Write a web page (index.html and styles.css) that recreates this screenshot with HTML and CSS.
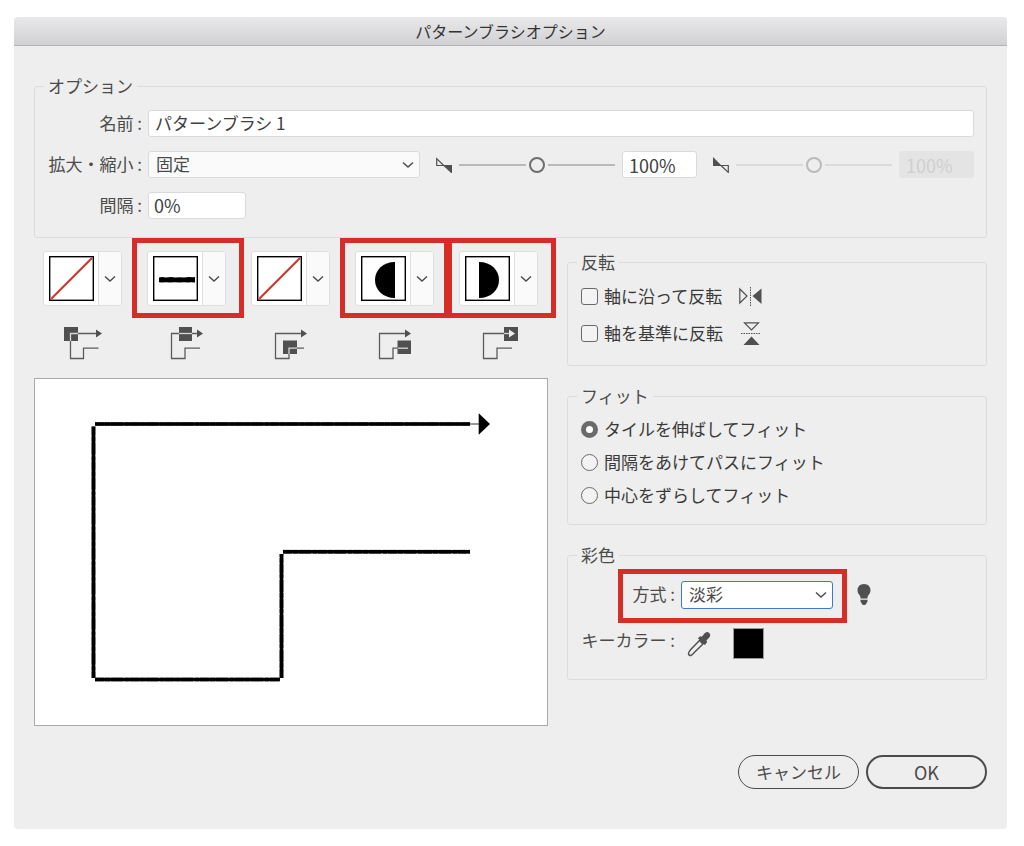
FILE: index.html
```html
<!DOCTYPE html>
<html lang="ja">
<head>
<meta charset="utf-8">
<meta name="viewport" content="width=device-width, initial-scale=1">
<title>パターンブラシオプション</title>
<link rel="stylesheet" href="styles.css">
</head>
<body>
<form class="dialog">
  <header class="titlebar"><h1 class="title">パターンブラシオプション</h1></header>

  <div class="content">
    <fieldset class="group group-options">
      <legend>オプション</legend>
      <div class="rows">
        <div class="row">
          <label class="label" for="name">名前 :</label>
          <input class="text-box grow" id="name" type="text" value="パターンブラシ 1">
        </div>
        <div class="row">
          <label class="label" for="scale">拡大・縮小 :</label>
          <div class="scale-line">
            <div class="select-wrap grow">
              <select class="select" id="scale"><option>固定</option></select>
              <svg class="chevron" viewBox="0 0 12 8"><path d="M1 1.5 6 6l5-4.5"/></svg>
            </div>
            <div class="scale-control">
              <svg class="scale-icon" viewBox="0 0 16 16"><path class="line" d="M.7 1.6v6.9h7zM8 8.5h7.4v6.9z"/><path class="solid" d="M8 8h8v8z"/></svg>
              <input class="slider" type="range" min="0" max="200" value="100" aria-label="最小">
              <input class="text-box number" type="text" value="100%" aria-label="最小の値">
            </div>
            <div class="scale-control">
              <svg class="scale-icon" viewBox="0 0 16 16"><path class="line" d="M8 8.5h7.3v6.9z"/><path class="solid" d="M0 0v9h9z"/></svg>
              <input class="slider" type="range" min="0" max="200" value="100" aria-label="最大" disabled>
              <input class="text-box number" type="text" value="100%" aria-label="最大の値" disabled>
            </div>
          </div>
        </div>
        <div class="row">
          <label class="label" for="spacing">間隔 :</label>
          <input class="text-box spacing" id="spacing" type="text" value="0%">
        </div>
      </div>
    </fieldset>

    <div class="columns">
      <section class="tiles-column">
        <div class="tiles">
          <div class="tile">
            <button class="swatch" type="button" aria-label="外角タイル">
              <svg class="thumb" viewBox="0 0 45 45"><rect class="frame" x=".7" y=".7" width="43.6" height="43.6"/><path class="none" d="M2 43 43 2"/></svg>
              <span class="drop"><svg class="chevron-inline" viewBox="0 0 12 8"><path d="M1 1.5 6 6l5-4.5"/></svg></span>
            </button>
            <svg class="position" viewBox="0 0 79 34"><path class="solid" d="M21 0h14v14H21z"/><path class="route" d="M35 6.500h19M27.500 14v17.500h13V21.200h15"/><path class="route-light" d="M27.500 14V6.500H35"/><path class="solid" d="M53 2.500 59 6.500l-6 4z"/></svg>
          </div>
          <div class="tile highlighted">
            <button class="swatch" type="button" aria-label="サイドタイル">
              <svg class="thumb" viewBox="0 0 45 45"><rect class="frame" x=".7" y=".7" width="43.6" height="43.6"/><path class="ink" d="M6 21.500l3-.4 4 .3 5-.3 4 .4 5-.3 4 .2 5-.3 4 .2 2-.2v5.300l-4-.2-3 .4-4-.4-5 .3-4-.3-5 .3-4-.3-4 .3-3-.3z"/></svg>
              <span class="drop"><svg class="chevron-inline" viewBox="0 0 12 8"><path d="M1 1.5 6 6l5-4.5"/></svg></span>
            </button>
            <svg class="position" viewBox="0 0 79 34"><path class="solid" d="M32 0h13v14H32z"/><path class="route" d="M32 6.500h-7.500v25h13.500V21.200h15M45 6.500h6"/><path class="route-light" d="M32 6.500h13"/><path class="solid" d="M50 2.500l6 4-6 4z"/></svg>
          </div>
          <div class="tile">
            <button class="swatch" type="button" aria-label="内角タイル">
              <svg class="thumb" viewBox="0 0 45 45"><rect class="frame" x=".7" y=".7" width="43.6" height="43.6"/><path class="none" d="M2 43 43 2"/></svg>
              <span class="drop"><svg class="chevron-inline" viewBox="0 0 12 8"><path d="M1 1.5 6 6l5-4.5"/></svg></span>
            </button>
            <svg class="position" viewBox="0 0 79 34"><path class="solid" d="M32 13.500h14v13.500H32z"/><path class="route" d="M51 6.500H24.500v25h13.500V27M46 21.200h7"/><path class="route-light" d="M38 27v-5.800h8"/><path class="solid" d="M50 2.500l6 4-6 4z"/></svg>
          </div>
          <div class="tile highlighted">
            <button class="swatch" type="button" aria-label="最初のタイル">
              <svg class="thumb" viewBox="0 0 45 45"><rect class="frame" x=".7" y=".7" width="43.6" height="43.6"/><path class="ink" d="M34 6v36C22 42 14 34 14 24S22 6 34 6z"/></svg>
              <span class="drop"><svg class="chevron-inline" viewBox="0 0 12 8"><path d="M1 1.5 6 6l5-4.5"/></svg></span>
            </button>
            <svg class="position" viewBox="0 0 79 34"><path class="solid" d="M42.500 13.500H56V27H42.500z"/><path class="route" d="M51 6.500H24.500v25h13.500V21.200h5"/><path class="route-light" d="M43 21.200h10"/><path class="solid" d="M50 2.500l6 4-6 4z"/></svg>
          </div>
          <div class="tile highlighted">
            <button class="swatch" type="button" aria-label="最後のタイル">
              <svg class="thumb" viewBox="0 0 45 45"><rect class="frame" x=".7" y=".7" width="43.6" height="43.6"/><path class="ink" d="M14 6v36c12 0 20-8 20-18S26 6 14 6z"/></svg>
              <span class="drop"><svg class="chevron-inline" viewBox="0 0 12 8"><path d="M1 1.5 6 6l5-4.5"/></svg></span>
            </button>
            <svg class="position" viewBox="0 0 79 34"><path class="solid" d="M45 0h14v14H45z"/><path class="route" d="M45 6.500H24.500v25h13.500V21.200h15"/><path class="route-light" d="M45 6.500h6"/><path class="pointer" d="M50 2.500l6 4-6 4z"/></svg>
          </div>
        </div>

        <div class="preview">
          <svg viewBox="0 0 512 346" role="img" aria-label="プレビュー">
            <path class="stroke" d="M60 45h375M58.500 47.500V299M60 300.500h185M246.500 299V175M248 172.800h187"/>
            <path class="stroke-rough" d="M60 45h375M58.500 47.500V299M60 300.500h185M246.500 299V175M248 172.800h187"/>
            <path class="stem" d="M435 45h10"/>
            <path class="ink" d="M443.700 34.300 455 45l-11.300 10.700z"/>
          </svg>
        </div>
      </section>

      <section class="settings">
        <fieldset class="group group-flip">
          <legend>反転</legend>
          <div class="rows">
            <div class="choice-line">
              <label class="choice"><input class="check" type="checkbox">軸に沿って反転</label>
              <svg class="flip-icon" viewBox="0 0 24 24"><path class="line" d="M1.800 5v14L9 12z"/><path class="dots" d="M12.500 3v20"/><path class="solid" d="M23.500 4.500v15.500L14.500 12z"/></svg>
            </div>
            <div class="choice-line">
              <label class="choice"><input class="check" type="checkbox">軸を基準に反転</label>
              <svg class="flip-icon" viewBox="0 0 24 24"><path class="line" d="M5.500 1.800h14l-7 7z"/><path class="dots" d="M2 12.500h20"/><path class="solid" d="M12.500 15.500l8 8.500h-16z"/></svg>
            </div>
          </div>
        </fieldset>

        <fieldset class="group group-fit">
          <legend>フィット</legend>
          <div class="rows">
            <label class="choice"><input class="radio" type="radio" name="fit" checked>タイルを伸ばしてフィット</label>
            <label class="choice"><input class="radio" type="radio" name="fit">間隔をあけてパスにフィット</label>
            <label class="choice"><input class="radio" type="radio" name="fit">中心をずらしてフィット</label>
          </div>
        </fieldset>

        <fieldset class="group group-color">
          <legend>彩色</legend>
          <div class="rows">
            <div class="method-line">
              <div class="row method">
                <label class="label" for="method">方式 :</label>
                <div class="select-wrap method-select">
                  <select class="select focused" id="method"><option>淡彩</option></select>
                  <svg class="chevron" viewBox="0 0 12 8"><path d="M1 1.5 6 6l5-4.5"/></svg>
                </div>
              </div>
              <button class="icon-button" type="button" aria-label="ヒント">
                <svg class="bulb" viewBox="0 0 14 22"><path class="solid" d="M7 0C3 0 .5 2.800.5 6.200c0 2.600 1.300 4 2.400 5.500.5.800.6 1.500.6 2.800h7c0-1.300.1-2 .6-2.800 1.100-1.500 2.400-2.900 2.400-5.500C13.500 2.800 11 0 7 0zM3.500 15.800h7v1.800L9 20c-.4.700-1 1-2 1s-1.600-.3-2-1l-1.500-2.400z"/></svg>
              </button>
            </div>
            <div class="key-line">
              <label class="label" for="key-color">キーカラー :</label>
              <button class="icon-button dropper-button" type="button" aria-label="スポイト">
                <svg class="dropper" viewBox="0 0 24 26"><path class="tube" d="M12.500 9.500 4.200 18c-1.800 1.900-2.600 3.200-2.700 4.600-.1 1.500 1.600 2.400 3 1.500 1.200-.7 1.800-1.700 3-2.800l8.500-8.300"/><path class="solid" d="M10.800 7.500 13 5.200l1.700.6 1.800-2C18.300 1 20.300.5 22 1.800c1.800 1.500 1.600 3.600-.3 5.500l-2.200 2 .6 1.900-2.200 2.700-1.400-1-.8 1-3.900-4.300.6-1z"/></svg>
              </button>
              <button class="key-color" id="key-color" type="button"></button>
            </div>
          </div>
        </fieldset>
      </section>
    </div>

    <footer class="actions">
      <button class="pill" type="button">キャンセル</button>
      <button class="pill primary" type="submit">OK</button>
    </footer>
  </div>
</form>
</body>
</html>
```

FILE: styles.css
```css
*,
*::after {
  box-sizing: border-box;
}

body {
  margin: 0;
  padding: 17px 17px 17px 14px;
  background: #fff;
  color: #4b4b4b;
  font-family: "Noto Sans CJK JP", "Noto Sans", sans-serif;
  font-size: 17px;
  line-height: 24px;
}

button,
input,
select {
  margin: 0;
  color: inherit;
  font: inherit;
}

svg {
  display: block;
  flex: none;
  fill: none;
}

/* Window */
.dialog {
  background: #eee;
  border-radius: 4px;
  overflow: hidden;
}

.titlebar {
  height: 29px;
  background: linear-gradient(#e9e8ea, #d1d0d2);
  border-bottom: 1px solid #b3b2b5;
}

.title {
  margin: 0;
  color: #333;
  font-size: 16px;
  font-weight: 400;
  line-height: 28px;
  text-align: center;
}

.content {
  padding: 28px 20px 40px;
}

/* Groups */
.group {
  min-width: 0;
  margin: 0;
  border: 1px solid #dcdcdc;
  border-radius: 3px;
}

.group legend {
  padding: 0 4px;
}

.rows {
  display: flex;
  flex-direction: column;
  padding-left: 4px;
}

.group-options {
  padding: 12px 12px 18px 9px;
}

.group-options .rows {
  gap: 14px;
}

.group-flip {
  padding: 10px 12px 20px 9px;
}

.group-flip .rows {
  gap: 13px;
}

.group-fit {
  padding: 9px 12px 17px 9px;
}

.group-fit .rows {
  align-items: flex-start;
  gap: 9px;
}

.group-color {
  padding: 14px 12px 20px 9px;
}

.group-color .rows {
  gap: 19px;
}

/* Fields */
.row {
  display: flex;
  align-items: center;
  gap: 6px;
}

.label {
  flex: none;
  width: 94px;
  padding-bottom: 2px;
  text-align: right;
  white-space: nowrap;
}

.grow {
  flex: 1;
  min-width: 0;
}

.text-box {
  height: 27px;
  padding: 0 6px 2px;
  background: #fff;
  border: 1px solid #dadada;
  border-radius: 3px;
  color: #404040;
}

.text-box:disabled {
  background: #e4e4e4;
  border-color: #e4e4e4;
  color: #cfcfcf;
}

.number {
  width: 75px;
  padding: 0 6px;
  font-size: 18px;
}

.spacing {
  width: 98px;
  padding: 0 5px 2px;
  font-size: 18px;
}

.select-wrap {
  position: relative;
}

.select {
  display: block;
  width: 100%;
  height: 27px;
  padding: 0 28px 2px 7px;
  appearance: none;
  background: #fafafa;
  border: 1px solid #dadada;
  border-radius: 3px;
}

.focused {
  height: 28px;
  background: #fff;
  border-color: #3c78d8;
}

.method-select {
  width: 152px;
}

.chevron {
  position: absolute;
  top: 10px;
  right: 6px;
  width: 12px;
  height: 8px;
  pointer-events: none;
}

.chevron-inline {
  width: 12px;
  height: 8px;
}

.chevron path,
.chevron-inline path {
  stroke: #4b4b4b;
  stroke-width: 1.4;
}

.scale-line {
  display: flex;
  flex: 1;
  gap: 16px;
}

.scale-control {
  display: flex;
  align-items: center;
  gap: 7px;
}

.scale-icon {
  width: 16px;
  height: 16px;
}

.slider {
  width: 156px;
  height: 24px;
  appearance: none;
  background: transparent;
}

.slider::-webkit-slider-runnable-track {
  height: 2px;
  background: #b9b9b9;
}

.slider::-webkit-slider-thumb {
  width: 16px;
  height: 16px;
  margin-top: -7px;
  appearance: none;
  background: #eee;
  border: 2px solid #6e6e6e;
  border-radius: 50%;
  box-shadow: 0 0 0 3px #eee;
}

.slider:disabled::-webkit-slider-runnable-track {
  background: #dadada;
}

.slider:disabled::-webkit-slider-thumb {
  border-color: #bababa;
}

/* Shared drawing styles */
.solid {
  fill: #505050;
}

.line {
  stroke: #505050;
  stroke-width: 1.2;
}

.ink {
  fill: #000;
}

/* Tiles */
.columns {
  display: grid;
  grid-template-columns: minmax(0, 1fr) 420px;
  gap: 19px;
  margin-top: 12px;
}

.tiles-column {
  padding-top: 1px;
}

.tiles {
  display: flex;
  gap: 25px;
  padding-left: 9px;
}

.tile {
  position: relative;
  display: flex;
  flex-direction: column;
  gap: 21px;
}

.highlighted::after,
.method::after {
  content: "";
  position: absolute;
  border: 5px solid #d62d26;
  pointer-events: none;
}

.highlighted::after {
  top: -13px;
  right: -18px;
  left: -15px;
  height: 80px;
}

.swatch {
  display: flex;
  width: 79px;
  height: 55px;
  padding: 0;
  background: #fff;
  border: 1px solid #dfdfdf;
  border-radius: 3px;
  overflow: hidden;
}

.thumb {
  width: 45px;
  height: 45px;
  margin: 4px 4px 4px 5px;
}

.frame {
  fill: #fff;
  stroke: #000;
  stroke-width: 1.4;
}

.none {
  stroke: #c93a33;
  stroke-width: 2.2;
}

.drop {
  display: flex;
  flex: 1;
  align-items: center;
  justify-content: center;
  align-self: stretch;
  background: #fafafa;
  border-left: 1px solid #dfdfdf;
}

.position {
  width: 79px;
  height: 34px;
}

.route {
  stroke: #5c5c5c;
  stroke-width: 1.3;
}

.route-light {
  stroke: #d8d8d8;
  stroke-width: 1.3;
}

.pointer {
  fill: #eee;
}

.preview {
  margin-top: 17px;
  background: #fff;
  border: 1px solid #a9a9a9;
}

.preview svg {
  width: 100%;
  height: auto;
}

.stroke {
  stroke: #000;
  stroke-width: 3.6;
}

.stroke-rough {
  stroke: #000;
  stroke-width: 4.2;
  stroke-dasharray: 9 1 5 1 12 2 4 1;
  stroke-opacity: 0.5;
}

.stem {
  stroke: #333;
  stroke-width: 1;
}

/* Settings */
.settings {
  display: flex;
  flex-direction: column;
  gap: 18px;
}

.choice-line {
  display: flex;
  align-items: center;
  gap: 16px;
}

.choice {
  display: flex;
  align-items: center;
  gap: 6px;
  color: #3a3a3a;
}

.check,
.radio {
  flex: none;
  width: 17px;
  height: 17px;
  appearance: none;
  border: 1px solid #6a6a6a;
}

.check {
  background: #f3f3f3;
  border-radius: 3px;
}

.radio {
  background: #f3f3f3;
  border-radius: 50%;
}

.radio:checked {
  background: #fff;
  border: 5px solid #6b6b6b;
}

.flip-icon {
  width: 24px;
  height: 24px;
}

.dots {
  stroke: #505050;
  stroke-width: 1;
  stroke-dasharray: 1.5 1;
}

.method-line {
  display: flex;
  align-items: center;
  gap: 24px;
}

.method {
  position: relative;
}

.method::after {
  top: -12px;
  right: -14px;
  bottom: -14px;
  left: 37px;
}

.icon-button {
  padding: 0;
  background: none;
  border: 0;
}

.bulb {
  width: 14px;
  height: 22px;
}

.key-line {
  display: flex;
  align-items: flex-start;
}

.dropper-button {
  padding: 3px 22px 0 12px;
}

.dropper {
  width: 24px;
  height: 26px;
}

.tube {
  stroke: #505050;
  stroke-width: 1.5;
}

.key-color {
  width: 31px;
  height: 31px;
  padding: 0;
  background: #000;
  border: 1px solid #9a9a9a;
}

/* Footer */
.actions {
  display: flex;
  justify-content: flex-end;
  gap: 7px;
  margin-top: 29px;
}

.pill {
  width: 121px;
  height: 34px;
  padding: 0;
  background: transparent;
  border: 1px solid #4b4b4b;
  border-radius: 17px;
}

.primary {
  border-width: 2px;
  font-size: 18px;
}
```
